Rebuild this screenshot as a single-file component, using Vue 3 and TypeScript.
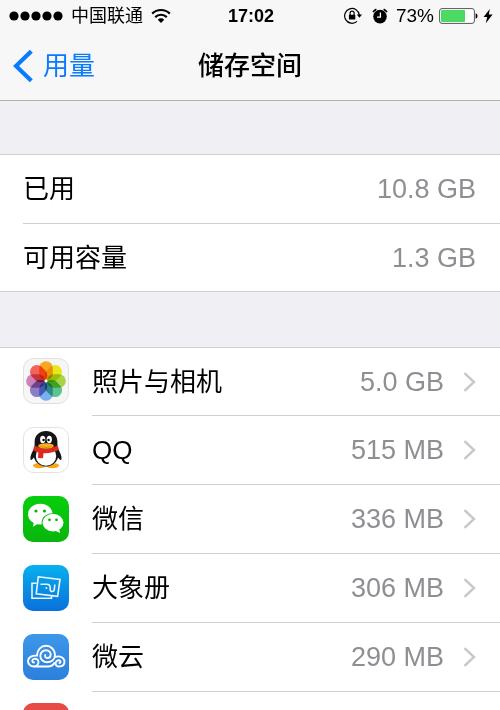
<script setup lang="ts">
interface Total {
  label: string
  value: string
}

interface AppUsage {
  id: string
  name: string
  size: string
}

const totals: Total[] = [
  { label: '已用', value: '10.8 GB' },
  { label: '可用容量', value: '1.3 GB' },
]

const apps: AppUsage[] = [
  { id: 'photos', name: '照片与相机', size: '5.0 GB' },
  { id: 'qq', name: 'QQ', size: '515 MB' },
  { id: 'wechat', name: '微信', size: '336 MB' },
  { id: 'album', name: '大象册', size: '306 MB' },
  { id: 'weiyun', name: '微云', size: '290 MB' },
  { id: 'more', name: '', size: '' },
]

const petals: string[] = [
  '#fba524', '#ebe51e', '#a8d445', '#5dc392',
  '#78b2ee', '#8a7fc4', '#cf82b4', '#f4625a',
]
</script>

<template>
  <div class="screen">
    <header class="top">
      <div class="status">
        <div class="status-left">
          <svg class="signal" width="54" height="10" viewBox="0 0 54 10" aria-hidden="true">
            <circle v-for="n in 5" :key="n" :cx="n * 11 - 6" cy="5" r="4.6" />
          </svg>
          <span class="carrier">中国联通</span>
          <svg width="20" height="16" viewBox="0 0 20 16" aria-hidden="true">
            <path d="M1.2 5.6a12.6 12.6 0 0 1 17.6 0M4.2 9.1a8.3 8.3 0 0 1 11.6 0" fill="none" stroke="#000" stroke-width="2.2" />
            <path d="M10 15 6.8 11.7a4.5 4.5 0 0 1 6.4 0z" />
          </svg>
        </div>
        <span class="time">17:02</span>
        <div class="status-right">
          <svg width="18" height="18" viewBox="0 0 18 18" aria-hidden="true">
            <path d="M15.4 8A7.4 7.4 0 1 0 13 14.4" fill="none" stroke="#000" stroke-width="1.2" />
            <path d="M12.8 7.4h5.2l-2.6 3.4z" />
            <rect x="4.9" y="7.8" width="6.4" height="4.8" rx=".6" />
            <path d="M6.1 8V6.2a2 2 0 0 1 4 0V8" fill="none" stroke="#000" stroke-width="1.2" />
          </svg>
          <svg class="alarm" width="16" height="16" viewBox="0 0 16 16" aria-hidden="true">
            <circle cx="8" cy="8.6" r="6.8" />
            <path d="M1 4.2a8 8 0 0 1 3.4-3M15 4.2a8 8 0 0 0-3.4-3" fill="none" stroke="#000" stroke-width="1.5" />
            <path d="M8.4 4.6v4.6H5" fill="none" stroke="#fff" stroke-width="1.3" />
          </svg>
          <span class="percent">73%</span>
          <svg width="39" height="16" viewBox="0 0 39 16" aria-hidden="true">
            <rect x=".6" y=".6" width="34.8" height="14.8" rx="2.4" fill="#fff" stroke="#555" />
            <rect x="2" y="2" width="24" height="12" rx="1" fill="#4cd964" />
            <path d="M36.6 5.2q2 .6 2 2.8t-2 2.8z" />
          </svg>
          <svg class="bolt" width="10" height="16" viewBox="0 0 10 16" aria-hidden="true">
            <path d="M6.8 1 .6 9h3.6L2.8 15.2 9.6 6.6H5.8z" />
          </svg>
        </div>
      </div>
      <nav class="nav">
        <a class="back" href="#usage">
          <svg width="20" height="34" viewBox="0 0 20 34" aria-hidden="true">
            <path d="M18.3 2.2 3 17l15.3 14.8" fill="none" stroke="#0a7aff" stroke-width="4.2" />
          </svg>
          <span>用量</span>
        </a>
        <h1 class="title">储存空间</h1>
      </nav>
    </header>

    <main>
      <dl class="group">
        <div v-for="total in totals" :key="total.label" class="row">
          <div class="body">
            <dt class="name">{{ total.label }}</dt>
            <dd class="value">{{ total.value }}</dd>
          </div>
        </div>
      </dl>

      <ul class="group">
        <li v-for="app in apps" :key="app.id">
          <a class="row" :href="'#' + app.id">
            <svg class="icon" width="46" height="46" viewBox="0 0 46 46" aria-hidden="true">
              <g v-if="app.id === 'photos'">
                <rect x=".5" y=".5" width="45" height="45" rx="10" fill="#f6f6f6" stroke="#e0e0e0" />
                <g class="petals" transform="translate(23 23)">
                  <rect
                    v-for="(color, i) in petals"
                    :key="color"
                    class="petal"
                    x="-6.8"
                    y="-19.8"
                    width="13.6"
                    height="18.8"
                    rx="6.6"
                    :fill="color"
                    :transform="'rotate(' + i * 45 + ')'"
                  />
                </g>
                <circle cx="23" cy="23" r="1.4" fill="#fff" />
              </g>
              <g v-else-if="app.id === 'qq'">
                <rect x=".5" y=".5" width="45" height="45" rx="10" fill="#fff" stroke="#e2e2e2" />
                <path d="M11.5 21C9 25 7 29 7.4 32.2c.3 1.8 2.6-.2 3.8-2.2h23.4c1.4 2 3.5 4 3.9 2.2C39 29 37 25 34.5 21z" fill="#151515" />
                <ellipse cx="16.5" cy="38.6" rx="6.5" ry="2.6" fill="#f9a51a" />
                <ellipse cx="29.5" cy="38.6" rx="6.5" ry="2.6" fill="#f9a51a" />
                <ellipse cx="23" cy="28" rx="12.3" ry="11.4" fill="#151515" />
                <ellipse cx="23" cy="29" rx="10.2" ry="9.8" fill="#fff" />
                <path d="M11.6 22V14.8C11.6 8.2 16.5 4 23 4s11.4 4.2 11.4 10.8V22z" fill="#151515" />
                <ellipse cx="19.7" cy="12.5" rx="2.6" ry="3.7" fill="#fff" />
                <ellipse cx="26.3" cy="12.5" rx="2.6" ry="3.7" fill="#fff" />
                <circle cx="20.6" cy="13" r="1.2" />
                <circle cx="25.6" cy="13" r="1.2" />
                <path d="M11.5 18.5Q23 25 34.5 18.5L36 22.5q-6.5 4.2-15.5 3.8l-.5 5-5-.3.3-5.4q-3-.7-5.3-2.6z" fill="#dc2a22" />
                <ellipse cx="23" cy="19" rx="7.8" ry="2.7" fill="#fbb01e" />
                <path d="M17 19.5q6 2 12 0" fill="none" stroke="#c77d10" stroke-width=".7" />
              </g>
              <g v-else-if="app.id === 'wechat'">
                <rect width="46" height="46" rx="10" fill="url(#green)" />
                <ellipse cx="17.3" cy="18.2" rx="12.3" ry="10.4" fill="#fff" />
                <path d="m11 26-1.2 4.8 5.6-3.2z" fill="#fff" />
                <ellipse cx="30" cy="26.6" rx="11.4" ry="9.7" fill="#08c00d" />
                <ellipse cx="30" cy="26.6" rx="10.5" ry="8.8" fill="#fff" />
                <path d="m32 34.5 5 2.4-1-4.6z" fill="#fff" />
                <g fill="#08b50c">
                  <circle cx="13" cy="15" r="1.6" />
                  <circle cx="21.5" cy="15" r="1.6" />
                  <circle cx="26.5" cy="23.8" r="1.4" />
                  <circle cx="33.5" cy="23.8" r="1.4" />
                </g>
              </g>
              <g v-else-if="app.id === 'album'" fill="none" stroke="#e8f5ff" stroke-width="1.6">
                <rect width="46" height="46" rx="10" fill="url(#blue)" stroke="none" />
                <path d="M13.5 18.2H9v15h19.500V31M15.300 11.800l21.700 2.600-2.400 17-21.400-2.600z" />
                <path d="M17.500 19.200h6.300c2.600 0 3.400 1.400 3.400 3.600v1.700c0 2.700 3.800 2.700 4.100 0l.5-5" />
                <circle cx="23.400" cy="23" r="1" fill="#e8f5ff" stroke="none" />
              </g>
              <g v-else-if="app.id === 'weiyun'">
                <rect width="46" height="46" rx="10" fill="url(#sky)" />
                <path
                  d="M11 28.500C9 28.500 8.700 25.800 10.500 25S15.500 25 15.500 27.800S13.500 32.500 10.700 32.500S5 30.500 5 27S8.500 21.300 14 21.500C14 16 18 11.800 23 11.800S32 16 32 21C32 25.500 28.500 28.200 24.500 28.200S17.300 25.500 17.300 22S20 16.200 23 16.200S27.700 18.300 27.700 20.700S25.800 24 24.200 24S21.600 22.500 22.300 21M32.500 22.800C37 21.300 41.500 24 41.500 27.600S39 32.500 36.200 32.500S32.300 30.500 32.600 28.800S35 25.800 36.500 26.300S38 29 36.500 29M10.700 32.500H25C28.200 32.500 30.200 31 31.300 29"
                  fill="none"
                  stroke="#fff"
                  stroke-width="1.9"
                  stroke-linecap="round"
                />
              </g>
              <rect v-else width="46" height="46" rx="10" fill="#e64b46" />
            </svg>
            <div class="body">
              <span class="name">{{ app.name }}</span>
              <span class="value">{{ app.size }}</span>
              <svg class="chevron" width="13" height="20" viewBox="0 0 13 20" aria-hidden="true">
                <path d="m1.5 1.2 9.5 8.8-9.5 8.8" fill="none" stroke="#c7c7cc" stroke-width="2.4" />
              </svg>
            </div>
          </a>
        </li>
      </ul>
    </main>

    <svg class="defs" width="0" height="0" aria-hidden="true">
      <defs>
        <linearGradient id="green" x2="0" y2="1">
          <stop offset="0" stop-color="#06cf0c" />
          <stop offset="1" stop-color="#09b50d" />
        </linearGradient>
        <linearGradient id="blue" x2="0" y2="1">
          <stop offset="0" stop-color="#08b0ee" />
          <stop offset="1" stop-color="#0a70dc" />
        </linearGradient>
        <linearGradient id="sky" x2="0" y2="1">
          <stop offset="0" stop-color="#3d97ea" />
          <stop offset="1" stop-color="#2c80dc" />
        </linearGradient>
      </defs>
    </svg>
  </div>
</template>

<style>
html,
body,
#app {
  height: 100%;
}

body {
  margin: 0;
  background: #efeff4;
}
</style>

<style scoped>
.screen {
  height: 100%;
  overflow: hidden;
  background: #efeff4;
  color: #000;
  font-family: "Liberation Sans", "Noto Sans CJK SC", sans-serif;
}

.screen svg {
  flex: none;
  display: block;
}

.screen .defs {
  position: absolute;
}

.top {
  background: #f7f7f7;
  border-bottom: 1px solid #b2b2b2;
}

.status {
  display: grid;
  grid-template-columns: 1fr auto 1fr;
  align-items: center;
  height: 32px;
  padding: 0 7px 0 9px;
  font-size: 18px;
  line-height: 32px;
}

.status-left,
.status-right {
  display: flex;
  align-items: center;
  gap: 8px;
}

.status-right {
  justify-content: flex-end;
  gap: 5px;
}

.time {
  font-weight: 700;
}

.alarm {
  margin: 0 3px 0 5px;
}

.percent {
  font-size: 19px;
}

.nav {
  display: grid;
  grid-template-columns: 1fr auto 1fr;
  align-items: center;
  height: 68px;
  padding: 0 13px;
}

.back {
  display: flex;
  align-items: center;
  gap: 10px;
  color: #0a7aff;
  font-size: 26px;
  line-height: 36px;
  text-decoration: none;
}

.title {
  margin: 0;
  font-size: 26px;
  font-weight: 500;
  line-height: 36px;
}

.group {
  margin: 53px 0 0;
  padding: 0;
  list-style: none;
  background: #fff;
  border-top: 1px solid #d0d0d4;
  border-bottom: 1px solid #d0d0d4;
}

.group + .group {
  margin-top: 55px;
}

.row {
  display: flex;
  align-items: center;
  gap: 23px;
  padding-left: 23px;
  color: inherit;
  text-decoration: none;
}

.icon {
  margin-bottom: 2px;
}

.body {
  display: flex;
  flex: 1;
  align-items: center;
  box-sizing: border-box;
  height: 69px;
  padding-right: 24px;
  border-bottom: 1px solid #d0d0d4;
}

li:first-child .body {
  height: 68px;
}

dl .row:last-child .body {
  height: 67px;
  border-bottom: 0;
}

.name {
  flex: 1;
  font-size: 26px;
  line-height: 36px;
}

.value {
  margin: 0;
  color: #8e8e93;
  font-size: 27px;
  line-height: 36px;
}

.chevron {
  margin-left: 19px;
}

.petals {
  isolation: isolate;
}

.petal {
  mix-blend-mode: multiply;
}
</style>
